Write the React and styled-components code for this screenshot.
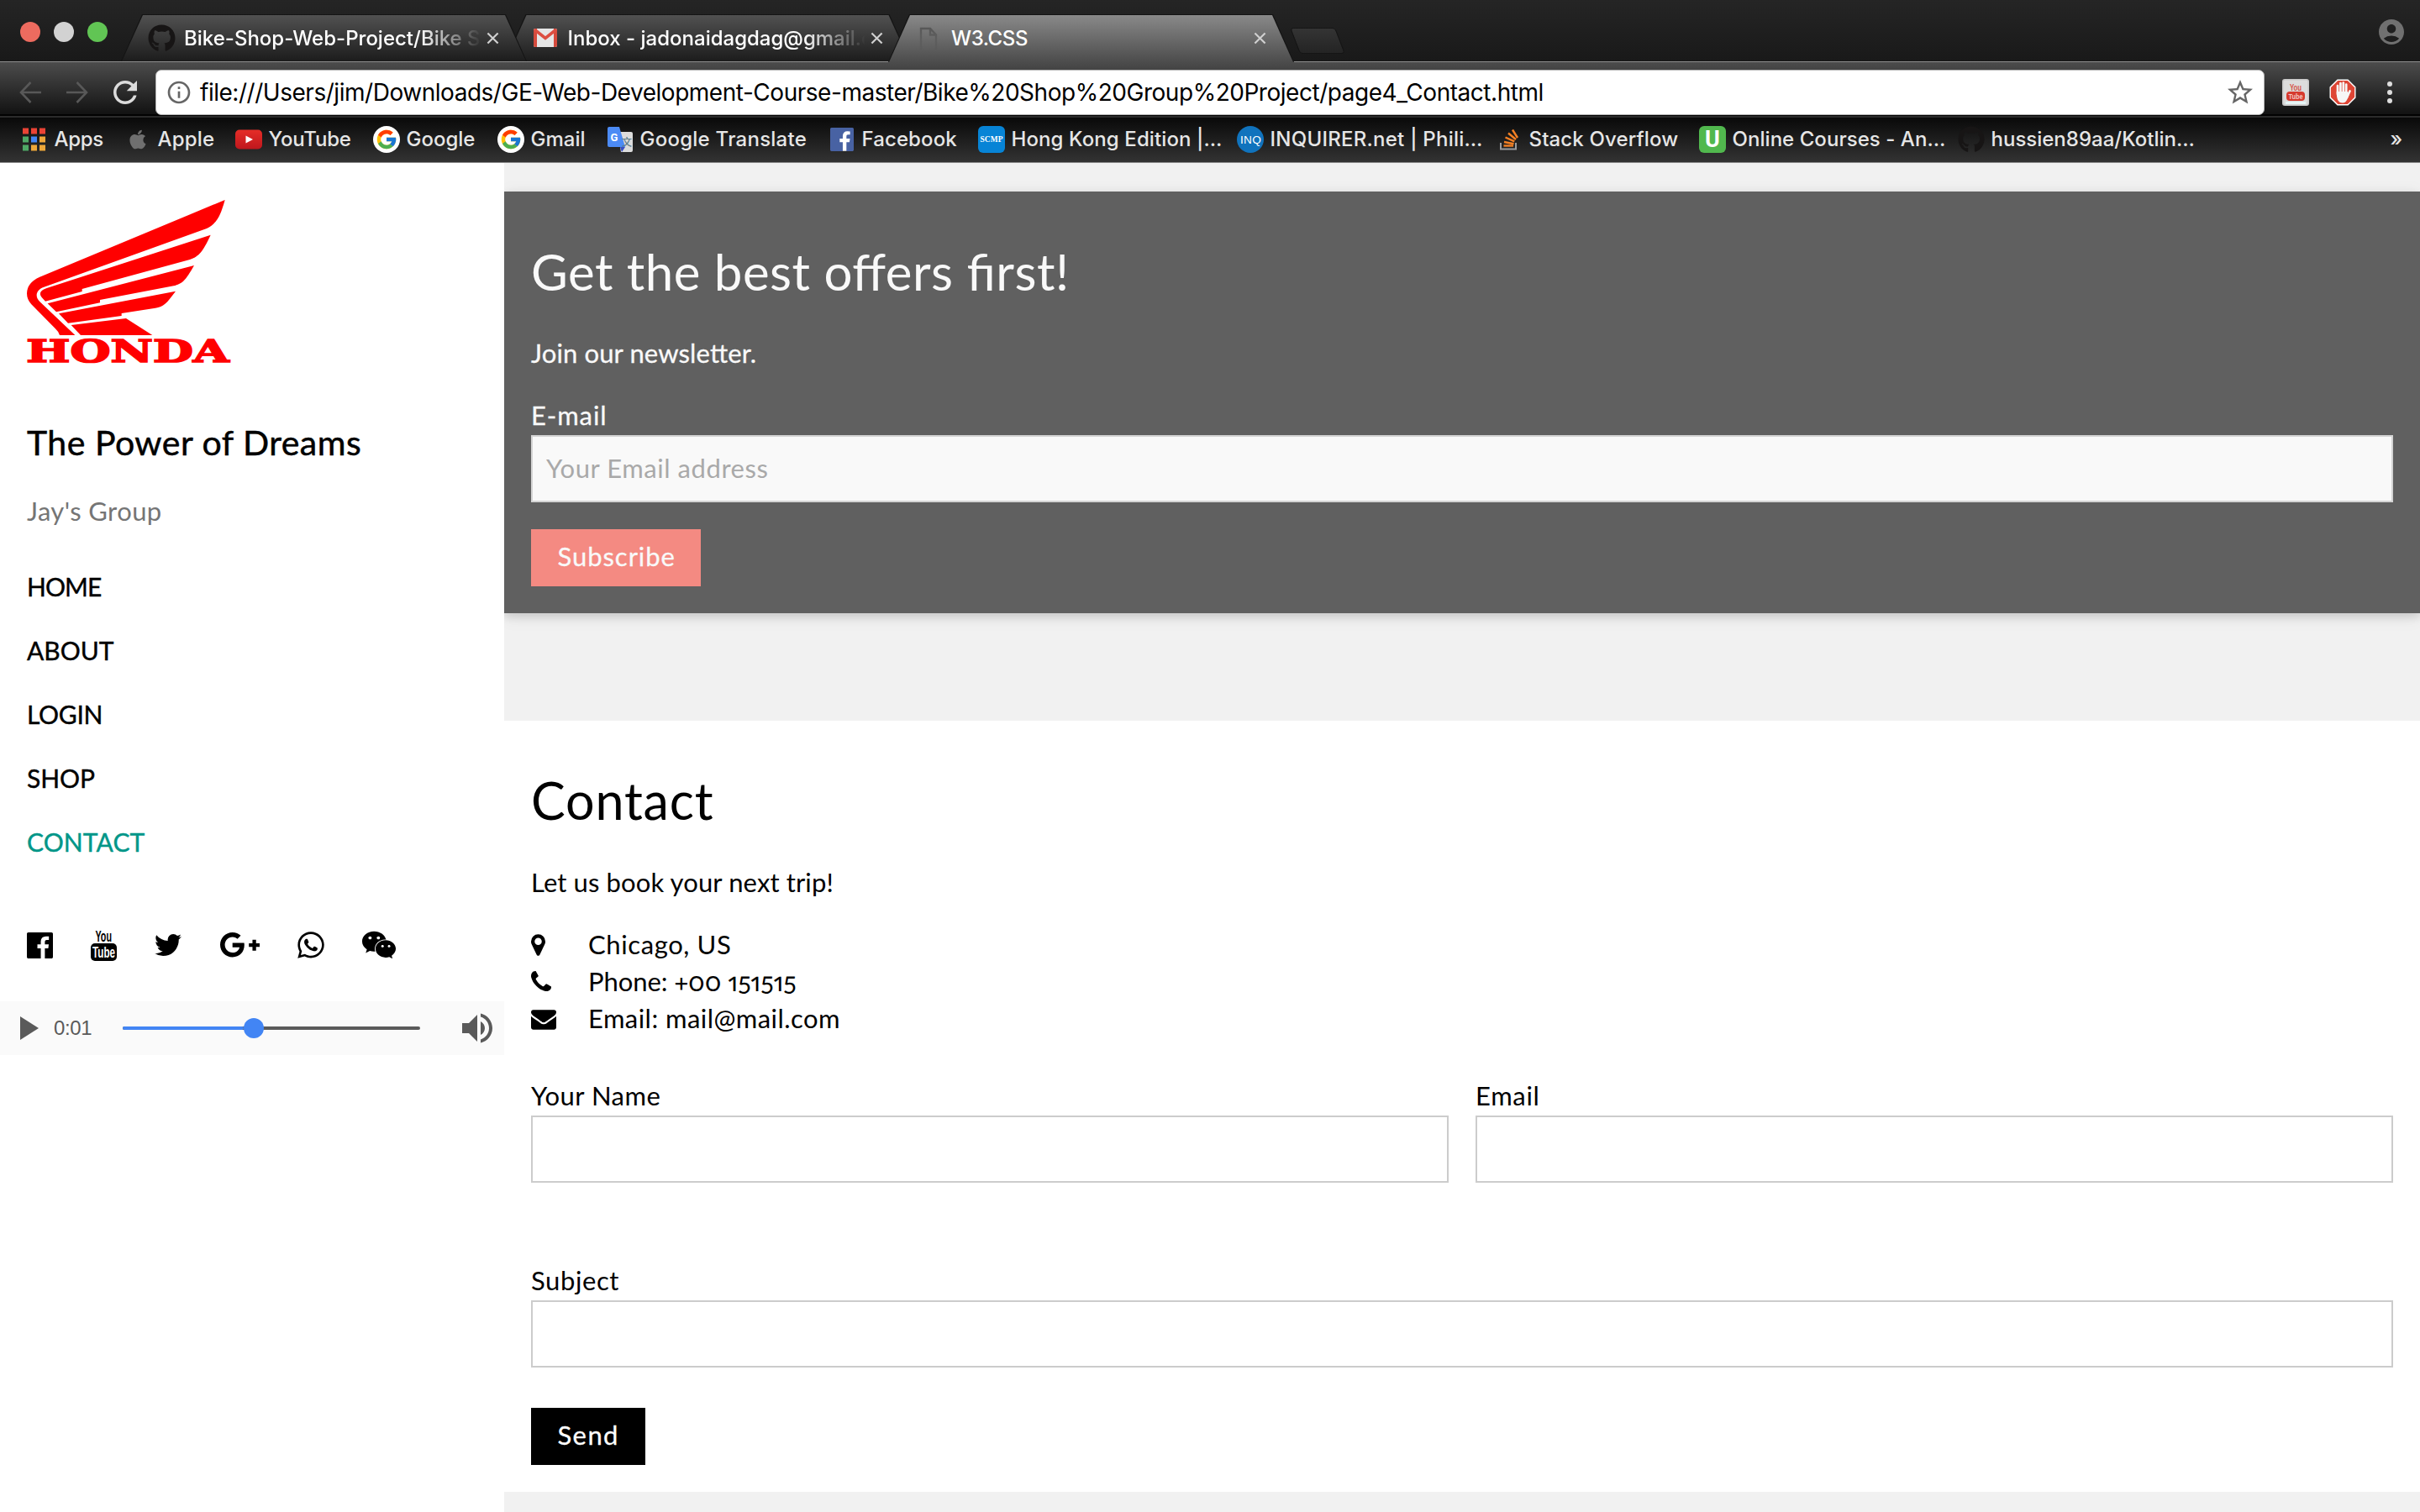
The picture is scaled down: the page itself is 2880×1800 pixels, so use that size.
import React from "react";
import styled, { createGlobalStyle, css } from "styled-components";
import { FaApple, FaGithub, FaWhatsapp, FaWeixin } from "react-icons/fa";
import { FcGoogle } from "react-icons/fc";
import { MdAccountCircle, MdInfoOutline, MdStarBorder } from "react-icons/md";

const uiFont = `Inter, Roboto, "Liberation Sans", sans-serif`;
const pageFont = `Lato, "Open Sans", "Liberation Sans", sans-serif`;

const GlobalStyle = createGlobalStyle`
  * { box-sizing: border-box; }
  body { margin: 0; background: #f1f1f1; }
  svg { display: block; flex: none; overflow: visible; }
`;

/* ---------- Browser window ---------- */

const Window = styled.div`
  display: flex;
  flex-direction: column;
  width: 2880px;
  height: 1800px;
  overflow: hidden;
  font-family: ${uiFont};
`;

const TabStrip = styled.div`
  display: flex;
  align-items: flex-end;
  height: 73px;
  flex: none;
  background: linear-gradient(#252525, #191919);
`;

const TrafficLights = styled.div`
  display: flex;
  align-items: center;
  gap: 16px;
  height: 70px;
  padding: 0 16px 0 24px;
`;

const Light = styled.span`
  width: 24px;
  height: 24px;
  border-radius: 50%;
  background: ${(p) => p.$color};
`;

const TabShape = styled.div`
  position: relative;
  z-index: ${(p) => p.$level};
  display: flex;
  align-items: center;
  width: 483px;
  height: ${(p) => (p.$active ? 57 : 56)}px;
  margin-right: -26.5px;
  margin-bottom: ${(p) => (p.$active ? -1 : 0)}px;
  padding: 0 33px 0 32px;
  flex: none;
  background: #141414;
  clip-path: polygon(25px 0, 458px 0, 100% 100%, 0 100%);

  &::before {
    content: "";
    position: absolute;
    inset: 1px 1px 0;
    z-index: -1;
    clip-path: polygon(25px 0, 456px 0, 100% 100%, 0 100%);
    background: ${(p) =>
      p.$active
        ? "linear-gradient(#898989, #4c4c4c)"
        : "linear-gradient(#515151, #1c1c1c)"};
  }
`;

const Favicon = styled.span`
  display: flex;
  align-items: center;
  justify-content: center;
  width: 32px;
  height: 32px;
  flex: none;
`;

const TabTitle = styled.span`
  width: 354px;
  margin-left: 11px;
  white-space: nowrap;
  color: #fff;
  font-size: 24px;
  font-weight: 500;
  line-height: 33px;
  letter-spacing: ${(p) => p.$tracking || 0}px;
  ${(p) =>
    p.$fade &&
    css`
      mask-image: linear-gradient(90deg, #000 280px, transparent 354px);
    `}
`;

const CloseIcon = styled.svg`
  width: 15px;
  height: 15px;
  margin-left: auto;
  stroke: #d0d0d0;
  stroke-width: 2.3;
  fill: none;
`;

const NewTab = styled.div`
  width: 54px;
  height: 31px;
  margin: 0 0 9px 27px;
  border: 1px solid #151515;
  border-radius: 4px;
  background: linear-gradient(#343434, #242424);
  transform: skewX(21deg);
`;

const Profile = styled.div`
  display: flex;
  align-items: center;
  height: 70px;
  margin-left: auto;
  padding-right: 16px;
  color: #707070;
  font-size: 36px;
`;

const Toolbar = styled.div`
  display: flex;
  align-items: center;
  height: 65px;
  flex: none;
  padding: 9px 33px 0 23px;
  border-top: 1px solid #8d8d8d;
  border-bottom: 2px solid #020202;
  background: linear-gradient(#4c4c4c, #121212);
`;

const NavIcon = styled.svg`
  width: ${(p) => p.$size}px;
  height: ${(p) => p.$size}px;
  margin-right: ${(p) => p.$gap}px;
  color: ${(p) => (p.$enabled ? "#dcdcdc" : "#585858")};
`;

const AddressBar = styled.div`
  display: flex;
  align-items: center;
  width: 2510px;
  height: 54px;
  padding: 0 10px 0 11px;
  border: 1px solid #b4b4b4;
  border-radius: 7px;
  background: #fff;
  color: #666;
`;

const AddressText = styled.span`
  flex: 1;
  margin-left: 9px;
  color: #000;
  font-size: 28px;
  line-height: 40px;
  letter-spacing: -0.47px;
  white-space: nowrap;
`;

const Extensions = styled.div`
  display: flex;
  align-items: center;
  gap: 24px;
  margin-left: 21px;
`;

const MenuDots = styled.div`
  display: flex;
  flex-direction: column;
  gap: 4px;
  margin-left: auto;

  span {
    width: 6px;
    height: 6px;
    border-radius: 50%;
    background: #dedede;
  }
`;

const BookmarkBar = styled.div`
  display: flex;
  align-items: center;
  height: 56px;
  flex: none;
  padding: 0 21px 2px 25px;
  border-top: 2px solid #2b2b2b;
  border-bottom: 1px solid #8b8b8b;
  background: linear-gradient(#090909, #333);
`;

const BookmarkItem = styled.div`
  display: flex;
  align-items: center;
  gap: 7.5px;
  width: ${(p) => p.$width}px;
  flex: none;
  color: #e6e6e6;
  font-size: 24px;
  font-weight: 500;
  line-height: 32px;
  letter-spacing: ${(p) => p.$tracking || 0}px;
  white-space: nowrap;
`;

const Overflow = styled.span`
  margin-left: auto;
  color: #e6e6e6;
  font-size: 24px;
  line-height: 30px;
  font-weight: 500;
`;

/* ---------- Page ---------- */

const Page = styled.div`
  display: flex;
  flex: 1;
  min-height: 0;
  font-family: ${pageFont};
  font-size: 31px;
  line-height: 46px;
  font-variant-numeric: oldstyle-nums proportional-nums;
  font-feature-settings: "liga" 1;
  color: #000;
`;

const Sidebar = styled.aside`
  position: relative;
  z-index: 1;
  display: flex;
  flex-direction: column;
  width: 600px;
  flex: none;
  padding-top: 44px;
  background: #fff;
`;

const Brand = styled.div`
  padding: 0 32px;
`;

const Slogan = styled.h4`
  margin: 65px 0 0;
  font-size: 41px;
  font-weight: 400;
  line-height: 60px;
  letter-spacing: 0.5px;
  -webkit-text-stroke: 0.5px currentColor;
`;

const Tagline = styled.p`
  margin: 28px 0 0;
  color: #757575;
  letter-spacing: 0.4px;
`;

const Nav = styled.nav`
  display: flex;
  flex-direction: column;
  margin-top: 29px;
  font-size: 30px;
`;

const NavLink = styled.a`
  padding: 15px 32px;
  color: ${(p) => (p.$active ? "#009688" : "#000")};
  letter-spacing: ${(p) => p.$tracking}px;
  -webkit-text-stroke: 0.4px currentColor;
`;

const Social = styled.div`
  display: flex;
  align-items: center;
  gap: 45px;
  height: 40px;
  margin-top: 65px;
  padding: 0 32px;
`;

const SocialIcon = styled.span`
  display: flex;
  align-items: center;
  justify-content: center;
  width: ${(p) => p.$width}px;
  height: 40px;
`;

const AudioPlayer = styled.div`
  display: flex;
  align-items: center;
  height: 64px;
  margin-top: 47px;
  padding: 0 14px 0 24px;
  background: #fafafa;
  color: #5a5a5a;
`;

const PlayTime = styled.span`
  width: 82px;
  margin-left: 18px;
  font: 24px/32px "Liberation Sans", sans-serif;
  letter-spacing: -0.4px;
`;

const Track = styled.div`
  display: flex;
  align-items: center;
  width: 354px;
  height: 4px;
  margin-right: auto;
  border-radius: 2px;
  background: #5a5a5a;
`;

const Played = styled.div`
  width: 144px;
  height: 4px;
  border-radius: 2px;
  background: #4285f4;
`;

const Thumb = styled.div`
  width: 24px;
  height: 24px;
  flex: none;
  border-radius: 50%;
  background: #4285f4;
`;

const Main = styled.main`
  display: flex;
  flex: 1;
  flex-direction: column;
  gap: 128px;
  padding-top: 34px;
  background: #f1f1f1;
`;

const Section = styled.section`
  display: flex;
  flex-direction: column;
  align-items: stretch;
  padding: 50px 32px 32px;
  background: ${(p) => (p.$dark ? "#606060" : "#fff")};
  color: ${(p) => (p.$dark ? "#f9f9f9" : "#000")};
  ${(p) =>
    p.$dark &&
    css`
      box-shadow: 0 4px 10px rgba(0, 0, 0, 0.12), 0 4px 20px rgba(0, 0, 0, 0.08);
      -webkit-text-stroke: 0.3px currentColor;
    `}
`;

const Heading = styled.h2`
  margin: 0;
  font-size: ${(p) => p.$size}px;
  font-weight: 400;
  line-height: 90px;
  letter-spacing: ${(p) => p.$tracking}px;
  -webkit-text-stroke: 0;
`;

const Paragraph = styled.p`
  margin: 29px 0;
  letter-spacing: ${(p) => p.$tracking}px;
`;

const Field = styled.label`
  display: flex;
  flex: 1;
  flex-direction: column;
  gap: 2px;
  line-height: 44px;
  letter-spacing: ${(p) => p.$tracking}px;
`;

const Input = styled.input`
  width: 100%;
  height: 80px;
  padding: 0 16px 3px;
  border: 2px solid ${(p) => (p.$muted ? "#d4d4d4" : "#ccc")};
  border-radius: 0;
  outline: none;
  background: ${(p) => (p.$muted ? "#f9f9f9" : "#fff")};
  font: 31px ${pageFont};
  letter-spacing: 0.56px;
  -webkit-text-stroke: 0;

  &::placeholder {
    color: #a9a9a9;
    opacity: 1;
  }
`;

const Button = styled.button`
  align-self: flex-start;
  width: ${(p) => p.$width}px;
  height: 68px;
  margin-top: ${(p) => p.$top}px;
  padding: 0 0 3px 31.5px;
  border: 0;
  background: ${(p) => p.$color};
  color: ${(p) => (p.$soft ? "#f9f9f9" : "#fff")};
  font: 31px/45px ${pageFont};
  letter-spacing: ${(p) => p.$tracking}px;
  text-align: left;
  -webkit-text-stroke: 0.3px currentColor;
`;

const Details = styled.div`
  display: flex;
  flex-direction: column;
`;

const DetailRow = styled.div`
  display: grid;
  grid-template-columns: 68px auto;
  align-items: center;
  height: 44px;
  line-height: 44px;
  letter-spacing: ${(p) => p.$tracking}px;

  svg {
    margin-top: ${(p) => p.$drop || 0}px;
  }
`;

const FormRow = styled.div`
  display: flex;
  gap: 32px;
  margin-top: ${(p) => p.$top}px;
`;

/* ---------- Drawings ---------- */

const FB_PATH =
  "M1579 128q35 0 60 25t25 60v1366q0 35-25 60t-60 25h-391v-595h199l30-232h-229v-148q0-56 23.5-84t91.5-28l122-1v-207q-63-9-178-9-136 0-217.500 80t-81.500 226v171h-200v232h200v595h-735q-35 0-60-25t-25-60v-1366q0-35 25-60t60-25h1366z";

const HondaLogo = () => (
  <svg width="241" height="194" viewBox="36 24 723 582" fill="#f00">
    <path d="M743 24C728 78 715 108 678 126L97 335C66 346 64 372 84 389L208 507H153Q150 495 137 483L52 397Q36 380 36 358Q36 320 82 299Z" />
    <path d="M692 149C665 208 650 226 618 237L233 342V351L102 386L89 372C78 358 85 346 107 339Z" />
    <path d="M633 258C602 313 590 324 560 331L297 381V391L141 424L110 394Z" />
    <path d="M567 350C536 392 524 406 495 410L374 429V438L183 464L150 430Z" />
    <path d="M390 447L484 507H228L194 471Z" />
    <text
      x="34"
      y="603"
      fontFamily="'DejaVu Serif', serif"
      fontWeight="700"
      fontSize="110"
      textLength="724"
      lengthAdjust="spacingAndGlyphs"
      stroke="#f00"
      strokeWidth="5"
    >
      HONDA
    </text>
  </svg>
);

const YouTubeOld = () => (
  <svg width="31" height="37" viewBox="0 0 31 37">
    <text x="5.500" y="13.800" fontFamily="'Liberation Sans', sans-serif" fontWeight="700" fontSize="18.500" textLength="19.500" lengthAdjust="spacingAndGlyphs">You</text>
    <rect x="0" y="16" width="31" height="21" rx="5" />
    <text x="2" y="33" fill="#fff" fontFamily="'Liberation Sans', sans-serif" fontWeight="700" fontSize="18" textLength="27" lengthAdjust="spacingAndGlyphs">Tube</text>
  </svg>
);

const AppsGrid = () => {
  const colors = ["#ea4335", "#ea4335", "#ea4335", "#4fa866", "#4285f4", "#eda73a", "#4fa866", "#eda73a", "#eda73a"];
  return (
    <svg width="28" height="28" viewBox="0 0 28 28">
      {colors.map((c, i) => (
        <rect key={i} x={(i % 3) * 10} y={Math.floor(i / 3) * 10 + 0.5} width="7" height="7" fill={c} />
      ))}
    </svg>
  );
};

const YouTubeMark = () => (
  <svg width="32" height="24" viewBox="0 0 32 24">
    <defs>
      <linearGradient id="ytRed" x1="0" y1="0" x2="0" y2="1">
        <stop offset="0" stopColor="#e52d27" />
        <stop offset="1" stopColor="#bf171d" />
      </linearGradient>
    </defs>
    <rect y="0.500" width="32" height="23" rx="5" fill="url(#ytRed)" />
    <path d="M12.500 7.500L21 12L12.500 16.500Z" fill="#fff" />
  </svg>
);

const GoogleMark = () => (
  <svg width="32" height="32" viewBox="0 0 32 32">
    <circle cx="16" cy="16" r="16" fill="#fff" />
    <FcGoogle x="2.500" y="2.500" size={27} />
  </svg>
);

const TranslateMark = () => (
  <svg width="32" height="32" viewBox="0 0 32 32">
    <path d="M13 7H29Q31 7 31 9V29Q31 31 29 31H17Z" fill="#dcdcdc" />
    <path d="M16 25H22L18 31Z" fill="#3a4fc0" />
    <path d="M3 1H15L22 25H3Q1 25 1 23V3Q1 1 3 1Z" fill="#4c8bf5" />
    <text x="4.500" y="17.500" fill="#fff" fontFamily="Roboto, sans-serif" fontWeight="700" fontSize="13">G</text>
    <text x="18" y="24" fill="#607d8b" fontFamily="'Noto Sans CJK SC', sans-serif" fontSize="12">文</text>
  </svg>
);

const FacebookMark = () => (
  <svg width="28" height="28" viewBox="128 128 1536 1536">
    <rect x="500" y="250" width="1100" height="1400" fill="#fff" />
    <path d={FB_PATH} fill="#4862a3" />
  </svg>
);

const ScmpMark = () => (
  <svg width="32" height="32" viewBox="0 0 32 32">
    <rect width="32" height="32" rx="6" fill="#0784d6" />
    <text x="2.500" y="19" fill="#fff" fontFamily="'Liberation Serif', serif" fontWeight="700" fontSize="9.500" textLength="27" lengthAdjust="spacingAndGlyphs">SCMP</text>
  </svg>
);

const InqMark = () => (
  <svg width="32" height="32" viewBox="0 0 32 32">
    <circle cx="16" cy="16" r="16" fill="#1073bd" />
    <text x="4" y="20.500" fill="#fff" fontFamily="'Liberation Sans', sans-serif" fontSize="12.500" textLength="25" lengthAdjust="spacingAndGlyphs">INQ</text>
  </svg>
);

const StackMark = () => (
  <svg width="24" height="28" viewBox="0 0 24 28" fill="none">
    <path d="M2 18V25.500H20V18" stroke="#9a9c9f" strokeWidth="2" />
    <g stroke="#f48024" strokeWidth="2.400">
      <path d="M5.500 21.500H17" />
      <path d="M6 17L17.500 19.300" />
      <path d="M7.500 11.500L18.300 16.300" />
      <path d="M11 6.500L20 14" />
      <path d="M16 2.500L22 12" />
    </g>
  </svg>
);

const UdemyMark = () => (
  <svg width="32" height="32" viewBox="0 0 32 32">
    <rect width="32" height="32" rx="6" fill="#51b84e" />
    <text x="16" y="25" textAnchor="middle" fill="#fff" fontFamily="Roboto, sans-serif" fontWeight="700" fontSize="27">U</text>
  </svg>
);

const GmailMark = () => (
  <svg width="28" height="22" viewBox="0 0 28 22">
    <rect width="28" height="22" rx="2" fill="#e6e6e6" />
    <path d="M0 2Q0 0 2 0H4V22H2Q0 22 0 20ZM28 2Q28 0 26 0H24V22H26Q28 22 28 20Z" fill="#d54b3d" />
    <path d="M1.500 1.500L14 11.500L26.500 1.500" fill="none" stroke="#dc4e41" strokeWidth="3.600" />
  </svg>
);

const FileMark = () => (
  <svg width="22" height="28" viewBox="0 0 22 28" fill="none" strokeWidth="2.400">
    <defs>
      <linearGradient id="fileFade" gradientUnits="userSpaceOnUse" x1="0" y1="0" x2="0" y2="28">
        <stop offset="0" stopColor="#565656" />
        <stop offset="1" stopColor="#565656" stopOpacity="0.300" />
      </linearGradient>
    </defs>
    <path d="M2 27V2H13L20 9.500V27M13 2V9.500H20" stroke="url(#fileFade)" />
  </svg>
);

const YouTubeExtension = () => (
  <svg width="32" height="32" viewBox="0 0 32 32">
    <rect width="32" height="32" rx="3" fill="#c9c9c9" />
    <rect x="1.500" y="1.500" width="29" height="29" rx="2" fill="#dcdcdc" />
    <text x="9" y="14" fill="#d5534a" fontFamily="'Liberation Sans', sans-serif" fontWeight="700" fontSize="10.500" textLength="14" lengthAdjust="spacingAndGlyphs">You</text>
    <rect x="5" y="15" width="22" height="11" rx="4" fill="#d63a2e" />
    <text x="7.500" y="24" fill="#f3c7c3" fontFamily="'Liberation Sans', sans-serif" fontWeight="700" fontSize="9.500" textLength="17" lengthAdjust="spacingAndGlyphs">Tube</text>
    <rect x="4" y="27" width="24" height="3" fill="#e6f5f6" />
  </svg>
);

const AdBlock = () => (
  <svg width="32" height="32" viewBox="0 0 32 32" strokeLinecap="round">
    <path d="M9.600 0.500H22.400L31.500 9.600V22.400L22.400 31.500H9.600L0.500 22.400V9.600Z" fill="#fff" />
    <path d="M10.200 1.900H21.800L30.100 10.200V21.800L21.800 30.100H10.200L1.900 21.800V10.200Z" fill="#de4535" />
    <g stroke="#f6f6f6" strokeWidth="2.700" fill="none">
      <path d="M10 8V18M13.400 5V17M16.800 4.500V17M20.200 6.500V18" />
      <path d="M24.500 14.500L21 22" />
    </g>
    <path d="M8.700 15H21.600L24 18C21.500 24 20.500 28.500 16 28.500C10.500 28.500 8.700 24 8.700 15Z" fill="#f6f6f6" />
  </svg>
);

/* ---------- Data ---------- */

const tabs = [
  { title: "Bike-Shop-Web-Project/Bike S", icon: <FaGithub size={33} color="#171515" />, fade: true, level: 3, tracking: 0 },
  { title: "Inbox - jadonaidagdag@gmail.c", icon: <GmailMark />, fade: true, level: 2, tracking: 0 },
  { title: "W3.CSS", icon: <FileMark />, active: true, level: 4, tracking: -0.4 },
];

const bookmarks = [
  { label: "Apps", icon: <AppsGrid />, width: 123, tracking: -0.3 },
  { label: "Apple", icon: <FaApple size={26} color="#6f6f6f" />, width: 132, tracking: 0.2 },
  { label: "YouTube", icon: <YouTubeMark />, width: 164, tracking: -0.2 },
  { label: "Google", icon: <GoogleMark />, width: 148, tracking: 0 },
  { label: "Gmail", icon: <GoogleMark />, width: 130, tracking: 0 },
  { label: "Google Translate", icon: <TranslateMark />, width: 264, tracking: 0.25 },
  { label: "Facebook", icon: <FacebookMark />, width: 178, tracking: 0.1 },
  { label: "Hong Kong Edition |…", icon: <ScmpMark />, width: 308, tracking: 0.1 },
  { label: "INQUIRER.net | Phili…", icon: <InqMark />, width: 308, tracking: 0.25 },
  { label: "Stack Overflow", icon: <StackMark />, width: 242, tracking: 0.15 },
  { label: "Online Courses - An…", icon: <UdemyMark />, width: 308, tracking: 0.05 },
  { label: "hussien89aa/Kotlin…", icon: <FaGithub size={32} color="#171515" />, width: 300, tracking: 0 },
];

const links = [
  { label: "HOME", tracking: -0.9 },
  { label: "ABOUT", tracking: 0 },
  { label: "LOGIN", tracking: -0.3 },
  { label: "SHOP", tracking: -0.1 },
  { label: "CONTACT", tracking: 0.1, active: true },
];

const PinIcon = () => (
  <svg width="17" height="26" viewBox="384 128 1024 1536">
    <path d="M1152 640q0-106-75-181t-181-75-181 75-75 181 75 181 181 75 181-75 75-181zm256 0q0 109-33 179l-364 774q-16 33-47.500 52t-67.500 19-67.500-19-46.500-52l-365-774q-33-70-33-179 0-212 150-362t362-150 362 150 150 362z" />
  </svg>
);

const PhoneIcon = () => (
  <svg width="24" height="24" viewBox="192 128 1408 1408">
    <path d="M1600 1240q0 27-10 70.500t-21 68.500q-21 50-122 106-94 51-186 51-27 0-53-3.500t-57.500-12.500-47-14.500-55.500-20.500-49-18q-98-35-175-83-127-79-264-216t-216-264q-48-77-83-175-3-9-18-49t-20.500-55.500-14.500-47-12.500-57.500-3.500-53q0-92 51-186 56-101 106-122 25-11 68.500-21t70.500-10q14 0 21 3 18 6 53 76 11 19 30 54t35 63.500 31 53.500q3 4 17.500 25t21.500 35.500 7 28.500q0 20-28.500 50t-62 55-62 53-28.500 46q0 9 5 22.500t8.500 20.500 14 24 11.500 19q76 137 174 235t235 174q2 1 19 11.500t24 14 20.500 8.500 22.500 5q18 0 46-28.500t53-62 55-62 50-28.500q14 0 28.500 7t35.500 21.500 25 17.500q25 15 53.500 31t63.500 35 54 30q70 35 76 53 3 7 3 21z" />
  </svg>
);

const MailIcon = () => (
  <svg width="30" height="24" viewBox="0 256 1792 1408">
    <path d="M1792 710v794q0 66-47 113t-113 47h-1472q-66 0-113-47t-47-113v-794q44 49 101 87 362 246 497 345 57 42 92.500 65.500t94.500 48 110 24.500h2q51 0 110-24.500t94.500-48 92.500-65.500q170-123 498-345 57-39 100-87zm0-294q0 79-49 151t-122 123q-376 261-468 325-10 7-42.500 31t-54 38.500-52 32.500-57.500 27-50 9h-2q-23 0-50-9t-57.500-27-52-32.500-54-38.500-42.500-31q-91-64-262-182.500t-205-142.500q-62-42-117-115.500t-55-136.500q0-78 41.500-130t118.500-52h1472q65 0 112.500 47t47.500 113z" />
  </svg>
);

const details = [
  { text: "Chicago, US", icon: <PinIcon />, tracking: 0.6, drop: 2 },
  { text: "Phone: +00 151515", icon: <PhoneIcon />, tracking: -0.05, drop: 0 },
  { text: "Email: mail@mail.com", icon: <MailIcon />, tracking: 0.45, drop: 4 },
];

export default function App() {
  return (
    <Window>
      <GlobalStyle />
      <TabStrip>
        <TrafficLights>
          <Light $color="#ed6b5f" />
          <Light $color="#d2d2d2" />
          <Light $color="#61c554" />
        </TrafficLights>
        {tabs.map((t) => (
          <TabShape key={t.title} $active={t.active} $level={t.level}>
            <Favicon>{t.icon}</Favicon>
            <TabTitle $fade={t.fade} $tracking={t.tracking}>{t.title}</TabTitle>
            <CloseIcon viewBox="0 0 16 16">
              <path d="M1.500 1.500L14.500 14.500M14.500 1.500L1.500 14.500" />
            </CloseIcon>
          </TabShape>
        ))}
        <NewTab />
        <Profile>
          <MdAccountCircle />
        </Profile>
      </TabStrip>

      <Toolbar>
        <NavIcon $size={26} $gap={30} viewBox="0 0 26 26" fill="none" stroke="currentColor" strokeWidth="2.600">
          <path d="M13.500 1L2 13L13.500 25M2 13H26" />
        </NavIcon>
        <NavIcon $size={26} $gap={30} viewBox="0 0 26 26" fill="none" stroke="currentColor" strokeWidth="2.600">
          <path d="M12.500 1L24 13L12.500 25M24 13H0" />
        </NavIcon>
        <NavIcon $size={28} $gap={22} $enabled viewBox="4 4 16 16" fill="currentColor">
          <path d="M17.650 6.350C16.200 4.900 14.210 4 12 4c-4.420 0-7.990 3.580-7.990 8s3.570 8 7.990 8c3.730 0 6.840-2.550 7.730-6h-2.080c-.820 2.330-3.040 4-5.650 4-3.310 0-6-2.690-6-6s2.690-6 6-6c1.660 0 3.140.690 4.220 1.780L13 11h7V4l-2.350 2.350z" />
        </NavIcon>
        <AddressBar>
          <MdInfoOutline size={32} />
          <AddressText>
            file:///Users/jim/Downloads/GE-Web-Development-Course-master/Bike%20Shop%20Group%20Project/page4_Contact.html
          </AddressText>
          <MdStarBorder size={36} />
        </AddressBar>
        <Extensions>
          <YouTubeExtension />
          <AdBlock />
        </Extensions>
        <MenuDots>
          <span />
          <span />
          <span />
        </MenuDots>
      </Toolbar>

      <BookmarkBar>
        {bookmarks.map((b) => (
          <BookmarkItem key={b.label} $width={b.width} $tracking={b.tracking}>
            <Favicon>{b.icon}</Favicon>
            {b.label}
          </BookmarkItem>
        ))}
        <Overflow>»</Overflow>
      </BookmarkBar>

      <Page>
        <Sidebar>
          <Brand>
            <HondaLogo />
            <Slogan>The Power of Dreams</Slogan>
            <Tagline>Jay's Group</Tagline>
          </Brand>
          <Nav>
            {links.map((l) => (
              <NavLink key={l.label} $active={l.active} $tracking={l.tracking}>
                {l.label}
              </NavLink>
            ))}
          </Nav>
          <Social>
            <SocialIcon $width={31}>
              <svg width="31" height="31" viewBox="128 128 1536 1536"><path d={FB_PATH} /></svg>
            </SocialIcon>
            <SocialIcon $width={31}><YouTubeOld /></SocialIcon>
            <SocialIcon $width={32}>
              <svg width="32" height="26" viewBox="108 256 1576 1280">
                <path d="M1684 408q-67 98-162 167 1 14 1 42 0 130-38 259.500t-115.500 248.500-184.500 210.500-258 146-323 54.500q-271 0-496-145 35 4 78 4 225 0 401-138-105-2-188-64.500t-114-159.500q33 5 61 5 43 0 85-11-112-23-185.500-111.500t-73.500-205.500v-4q68 38 146 41-66-44-105-115t-39-154q0-88 44-163 121 149 294.500 238.500t371.500 99.500q-8-38-8-74 0-134 94.500-228.500t228.500-94.500q140 0 236 102 109-21 205-78-37 115-142 178 93-10 186-50z" />
              </svg>
            </SocialIcon>
            <SocialIcon $width={48}>
              <svg width="47" height="29.400" viewBox="12.800 64 614.400 384">
                <path d="M386.061 228.496c1.834 9.692 3.143 19.384 3.143 31.956C389.204 370.205 315.599 448 204.800 448c-106.084 0-192-85.915-192-192s85.916-192 192-192c51.864 0 95.083 18.859 128.611 50.292l-52.126 50.030c-14.145-13.621-39.028-29.599-76.485-29.599-65.484 0-118.920 54.221-118.920 121.277 0 67.056 53.436 121.277 118.920 121.277 75.961 0 104.513-54.745 108.965-82.773H204.800v-66.009h181.261zm185.406 6.437V179.200h-56.001v55.733h-55.733v56.001h55.733v55.733h56.001v-55.733H627.200v-56.001h-55.733z" />
              </svg>
            </SocialIcon>
            <SocialIcon $width={31}><FaWhatsapp size={36} /></SocialIcon>
            <SocialIcon $width={42}><FaWeixin size={42} /></SocialIcon>
          </Social>
          <AudioPlayer>
            <svg width="22" height="28" viewBox="8 5 11 14" fill="currentColor"><path d="M8 5v14l11-7z" /></svg>
            <PlayTime>0:01</PlayTime>
            <Track>
              <Played />
              <Thumb />
            </Track>
            <svg width="36" height="36" viewBox="3 3 18 18" fill="currentColor">
              <path d="M3 9v6h4l5 5V4L7 9H3zm13.500 3c0-1.770-1.020-3.290-2.500-4.030v8.050c1.480-.730 2.500-2.250 2.500-4.020zM14 3.230v2.060c2.890.860 5 3.540 5 6.710s-2.110 5.850-5 6.710v2.060c4.010-.910 7-4.490 7-8.770s-2.990-7.860-7-8.770z" />
            </svg>
          </AudioPlayer>
        </Sidebar>

        <Main>
          <Section $dark>
            <Heading $size={60} $tracking={0.5}>Get the best offers first!</Heading>
            <Paragraph $tracking={0.13}>Join our newsletter.</Paragraph>
            <Field $tracking={0.9}>
              E-mail
              <Input $muted placeholder="Your Email address" />
            </Field>
            <Button $width={202} $top={32} $color="#f48a82" $soft $tracking={0.95}>Subscribe</Button>
          </Section>

          <Section>
            <Heading $size={61} $tracking={0.85}>Contact</Heading>
            <Paragraph $tracking={0.12}>Let us book your next trip!</Paragraph>
            <Details>
              {details.map((d) => (
                <DetailRow key={d.text} $tracking={d.tracking} $drop={d.drop}>
                  {d.icon}
                  <span>{d.text}</span>
                </DetailRow>
              ))}
            </Details>
            <FormRow $top={48}>
              <Field $tracking={0.5}>
                Your Name
                <Input />
              </Field>
              <Field $tracking={0.7}>
                Email
                <Input />
              </Field>
            </FormRow>
            <FormRow $top={94}>
              <Field $tracking={0.6}>
                Subject
                <Input />
              </Field>
            </FormRow>
            <Button $width={136} $top={48} $color="#000" $tracking={1.4}>Send</Button>
          </Section>
        </Main>
      </Page>
    </Window>
  );
}
